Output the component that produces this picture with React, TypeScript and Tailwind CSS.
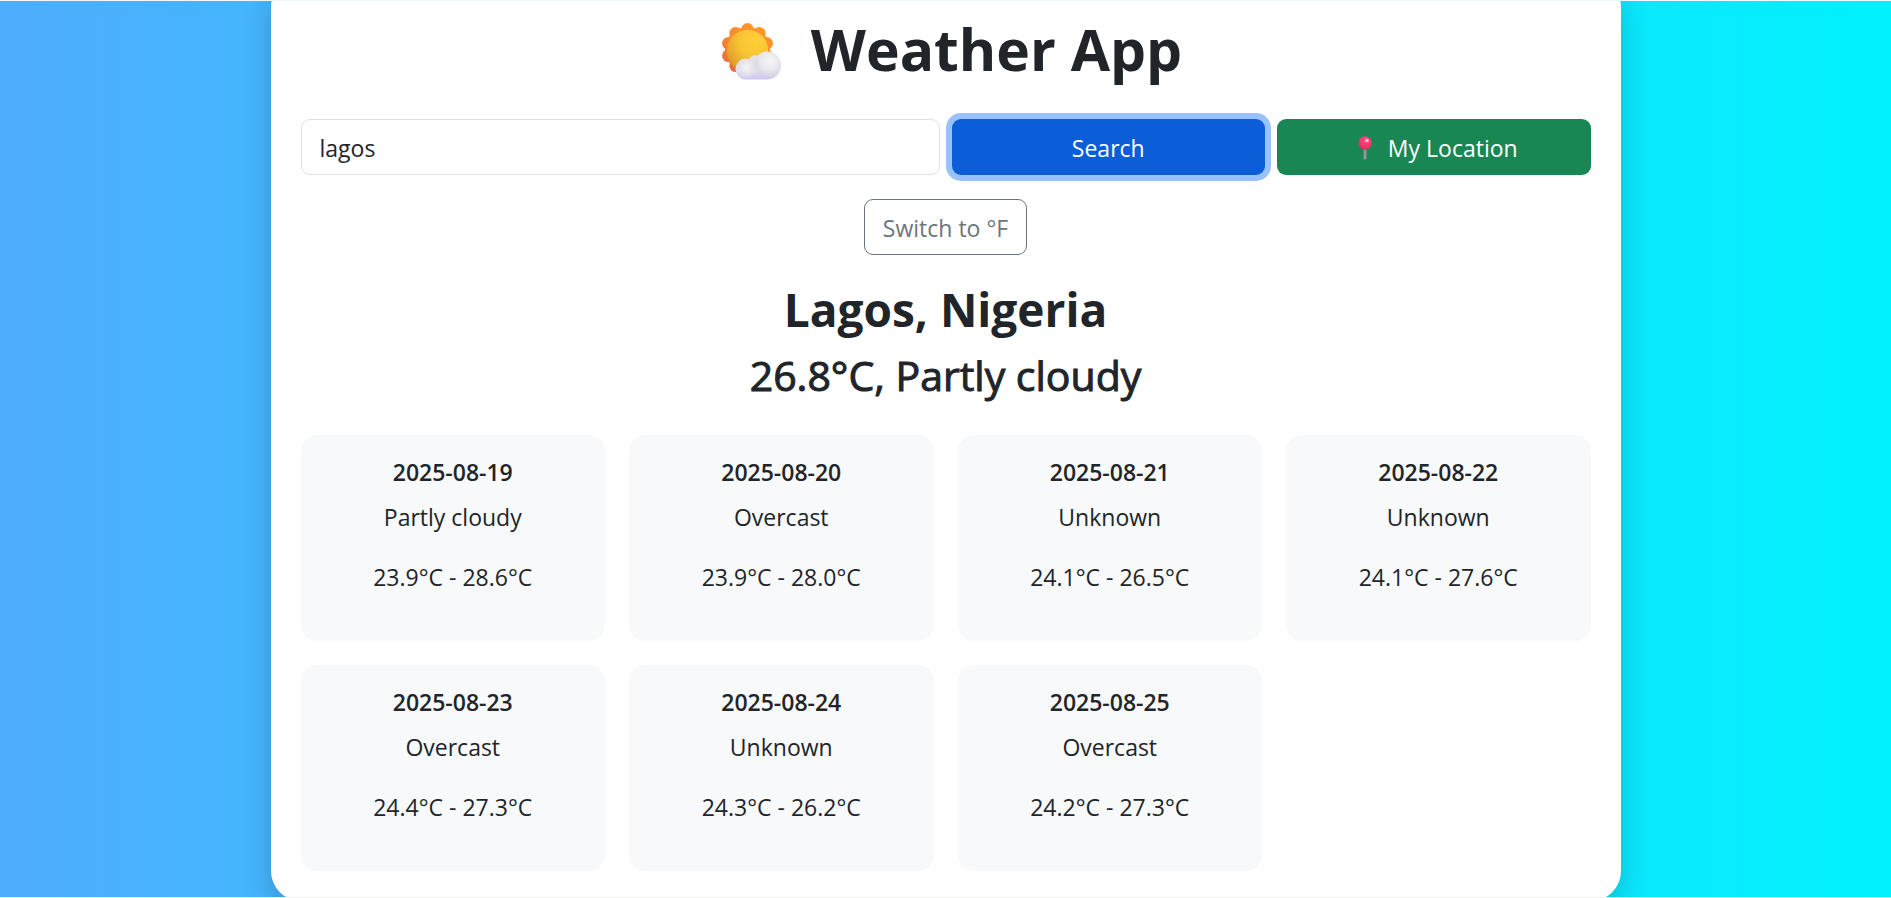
import { useState } from "react";

type Day = { date: string; condition: string; low: number; high: number };

const DAYS: Day[] = [
  { date: "2025-08-19", condition: "Partly cloudy", low: 23.9, high: 28.6 },
  { date: "2025-08-20", condition: "Overcast", low: 23.9, high: 28.0 },
  { date: "2025-08-21", condition: "Unknown", low: 24.1, high: 26.5 },
  { date: "2025-08-22", condition: "Unknown", low: 24.1, high: 27.6 },
  { date: "2025-08-23", condition: "Overcast", low: 24.4, high: 27.3 },
  { date: "2025-08-24", condition: "Unknown", low: 24.3, high: 26.2 },
  { date: "2025-08-25", condition: "Overcast", low: 24.2, high: 27.3 },
];

function SunCloudIcon() {
  const petals = Array.from({ length: 10 }, (_, i) => {
    const a = (i * Math.PI) / 5;
    return { x: 26.5 + 20 * Math.sin(a), y: 26.5 - 20 * Math.cos(a) };
  });
  return (
    <svg viewBox="0 0 60 57" className="mt-1 h-[57px] w-[60px] shrink-0" aria-hidden="true">
      <defs>
        <linearGradient id="rays" gradientUnits="userSpaceOnUse" x1="42" y1="2" x2="12" y2="50">
          <stop offset="0" stopColor="#ff9a26" />
          <stop offset="0.5" stopColor="#fb8a2e" />
          <stop offset="1" stopColor="#e8693c" />
        </linearGradient>
        <radialGradient id="disc" cx="0.72" cy="0.25" r="0.85">
          <stop offset="0" stopColor="#ffd03a" />
          <stop offset="0.5" stopColor="#f8c433" />
          <stop offset="1" stopColor="#dd9a28" />
        </radialGradient>
        <linearGradient id="cloudBase" x1="0" y1="0" x2="0" y2="1">
          <stop offset="0" stopColor="#e4e3e8" />
          <stop offset="0.7" stopColor="#e0dee9" />
          <stop offset="1" stopColor="#cfc4f6" />
        </linearGradient>
        <radialGradient id="puffLeft" cx="0.5" cy="0.45" r="0.55">
          <stop offset="0" stopColor="#f7f7f9" />
          <stop offset="1" stopColor="#dedde5" stopOpacity="0.4" />
        </radialGradient>
        <radialGradient id="puffRight" cx="0.6" cy="0.35" r="0.65">
          <stop offset="0" stopColor="#f6f6f8" />
          <stop offset="0.6" stopColor="#e8e7ec" />
          <stop offset="1" stopColor="#d5d3de" stopOpacity="0.5" />
        </radialGradient>
      </defs>
      <g fill="url(#rays)">
        <circle cx="26.5" cy="26.5" r="22.5" />
        {petals.map((p, i) => (
          <circle key={i} cx={p.x} cy={p.y} r="6.4" />
        ))}
      </g>
      <circle cx="26.5" cy="27.5" r="20.7" fill="url(#disc)" />
      <path
        d="M25.5 56.5a10.5 10.5 0 1 1 3-20.4c1-3.4 4.5-4.6 7.5-3.3A14 14 0 1 1 46 56.5Z"
        fill="url(#cloudBase)"
      />
      <circle cx="25.5" cy="45.5" r="9.5" fill="url(#puffLeft)" />
      <circle cx="46" cy="41.5" r="12.5" fill="url(#puffRight)" />
    </svg>
  );
}

function PinIcon() {
  return (
    <svg viewBox="0 0 14 24" className="h-6 w-[14px] shrink-0" aria-hidden="true">
      <defs>
        <radialGradient id="pinHead" cx="0.6" cy="0.3" r="0.75">
          <stop offset="0" stopColor="#ff4c86" />
          <stop offset="0.6" stopColor="#f5376c" />
          <stop offset="1" stopColor="#d02a5c" />
        </radialGradient>
      </defs>
      <rect x="5.5" y="12" width="3" height="11.5" rx="1" fill="#98919c" />
      <circle cx="7" cy="7" r="6.7" fill="url(#pinHead)" />
      <circle cx="9" cy="4.5" r="1.8" fill="#ffc2d6" />
    </svg>
  );
}

export default function App() {
  const [city, setCity] = useState("lagos");
  const [celsius, setCelsius] = useState(true);
  const temp = (c: number) =>
    celsius ? `${c.toFixed(1)}°C` : `${((c * 9) / 5 + 32).toFixed(1)}°F`;

  return (
    <div className="flex min-h-screen items-start justify-center overflow-hidden border-t border-b border-t-[#f0f8ff] border-b-[#f3f3f1] bg-[linear-gradient(to_right,#4facfe,#00f2fe)] font-['Open_Sans','Noto_Sans',sans-serif] text-[23px] leading-9 text-[#212529]">
      <main className="-mt-6 -mb-6 w-full max-w-[1350px] rounded-[30px] bg-white px-[30px] pt-9 pb-[30px] text-center shadow-[0_12px_30px_rgba(0,0,0,0.2)]">
        <h1 className="mb-[34px] flex items-center justify-center gap-[30px] pl-3 text-[57px] leading-[72px] font-bold">
          <SunCloudIcon />
          Weather App
        </h1>
        <form className="grid grid-cols-4 gap-3" onSubmit={(e) => e.preventDefault()}>
          <input
            type="text"
            aria-label="City"
            value={city}
            onChange={(e) => setCity(e.target.value)}
            className="col-span-2 h-14 min-w-0 rounded-[9px] border border-[#dee2e6] bg-white px-[18px] pt-0.5 outline-none"
          />
          <button
            type="submit"
            className="h-14 rounded-[9px] bg-[#0b5ed7] pt-0.5 text-white ring-6 ring-[#98c1fe]"
          >
            Search
          </button>
          <button
            type="button"
            className="flex h-14 items-center justify-center gap-4 rounded-[9px] bg-[#198754] pt-0.5 pl-2 text-white"
          >
            <PinIcon />
            My Location
          </button>
        </form>
        <button
          type="button"
          onClick={() => setCelsius(!celsius)}
          className="mt-6 h-14 rounded-[9px] border border-[#6c757d] px-[18px] pt-0.5 text-[#6c757d]"
        >
          Switch to {celsius ? "°F" : "°C"}
        </button>
        <h2 className="mt-6 mb-3 text-[46px] leading-[60px] font-bold">Lagos, Nigeria</h2>
        <h3 className="mb-9 text-[41px] leading-[48px] font-medium [-webkit-text-stroke:1px_#212529]">
          {temp(26.8)}, Partly cloudy
        </h3>
        <div className="grid grid-cols-4 gap-6">
          {DAYS.map((d) => (
            <article key={d.date} className="rounded-2xl bg-[#f8f9fb] px-6 pt-[22px] pb-[46px]">
              <h4 className="mb-3 leading-[30px] font-semibold">{d.date}</h4>
              <p className="mb-6">{d.condition}</p>
              <p>
                {temp(d.low)} - {temp(d.high)}
              </p>
            </article>
          ))}
        </div>
      </main>
    </div>
  );
}
